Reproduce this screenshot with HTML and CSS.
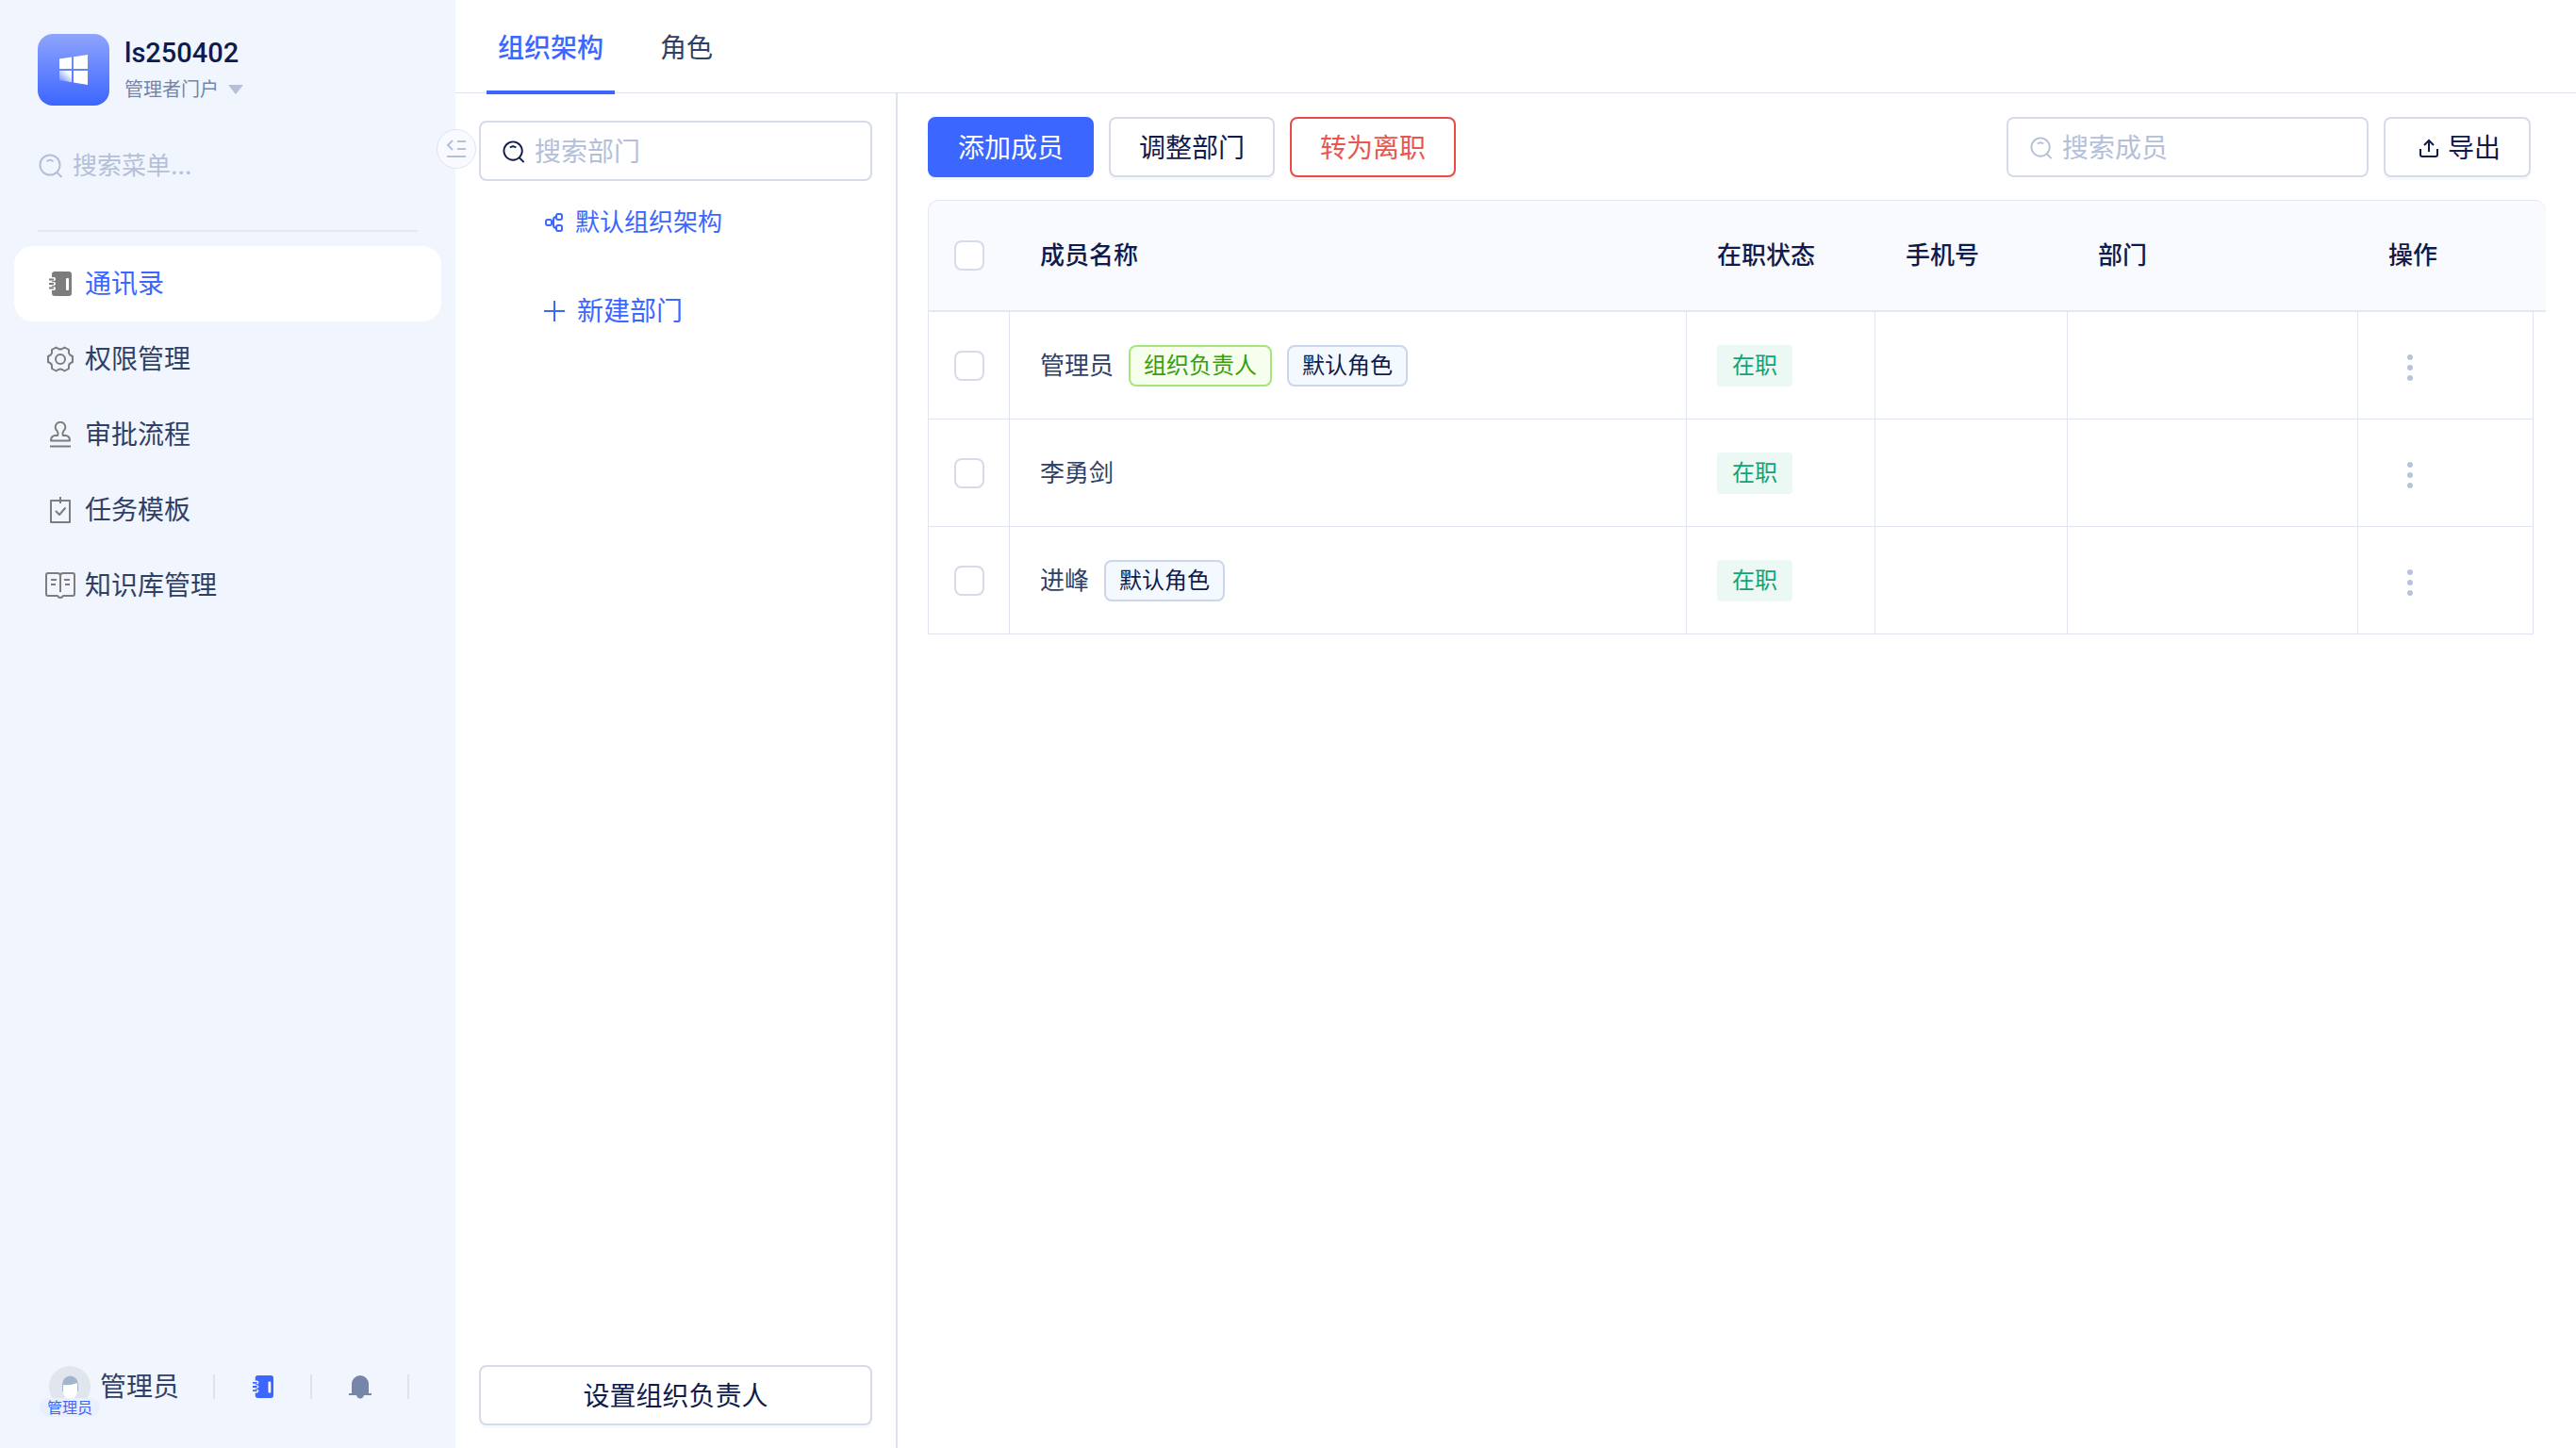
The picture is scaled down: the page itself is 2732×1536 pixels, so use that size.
FILE: index.html
```html
<!DOCTYPE html>
<html lang="zh-CN">
<head>
  <meta charset="UTF-8">
  <meta name="viewport" content="width=device-width, initial-scale=1">
  <title>通讯录</title>
  <link rel="stylesheet" href="styles.css">
</head>
<body>
  <svg width="0" height="0" class="sprite" aria-hidden="true">
    <symbol id="icon-search" viewBox="0 0 26 26">
      <circle cx="12" cy="12" r="10.5" fill="none" stroke="currentColor" stroke-width="2"/>
      <path d="M8.5 8.2Q12 5.4 15.500 8.200M19 19.500L24.500 25" fill="none" stroke="currentColor" stroke-width="2"/>
    </symbol>
    <symbol id="icon-contacts" viewBox="0 0 24 26">
      <path fill="currentColor" d="M6 0h15a3 3 0 0 1 3 3v20a3 3 0 0 1-3 3H6a3 3 0 0 1-3-3v-3h2a2 2 0 0 0 0-4H3v-1h2a2 2 0 0 0 0-4H3v-1h2a2 2 0 0 0 0-4H3V3a3 3 0 0 1 3-3z"/>
      <path d="M0 8.500h5M0 13h5M0 17.500h5" stroke="currentColor" stroke-width="2"/>
      <rect x="18" y="7" width="3" height="13" rx="1" fill="#fff"/>
    </symbol>
  </svg>

  <div class="app">
    <aside class="sidebar">
      <div class="brand">
        <div class="logo">
          <svg width="32" height="32" viewBox="0 0 32 32">
            <defs>
              <linearGradient id="pane" x1="1" y1="0" x2="0" y2="1">
                <stop offset="0.2" stop-color="#fff"/>
                <stop offset="1" stop-color="#fff" stop-opacity="0.1"/>
              </linearGradient>
            </defs>
            <path fill="#fff" d="M1 4.500L14 2.500V15H1zM16 2.200L31 0V15H16zM16 17H31V32L16 29.500z"/>
            <path fill="url(#pane)" d="M1 17H14V29.200L1 27z"/>
          </svg>
        </div>
        <div>
          <div class="brand-name">ls250402</div>
          <button class="portal" type="button">管理者门户 <span class="caret"></span></button>
        </div>
      </div>
      <label class="menu-search">
        <svg width="26" height="26"><use href="#icon-search"/></svg>
        <input type="text" placeholder="搜索菜单..." aria-label="搜索菜单">
      </label>

      <nav class="menu">
        <a href="#" class="menu-item active">
          <svg width="24" height="26"><use href="#icon-contacts"/></svg>
          <span>通讯录</span>
        </a>
        <a href="#" class="menu-item">
          <svg width="28" height="28" viewBox="0 0 28 28"><path d="M9.500 1.500L12 3Q14 4 16 3L18.500 1.500L23 4V7Q23 9 25 10L27 11V17L25 18Q23 19 23 21V24L18.500 26.500L16 25Q14 24 12 25L9.500 26.500L5 24V21Q5 19 3 18L1 17V11L3 10Q5 9 5 7V4Z"/><circle cx="14" cy="14" r="5"/></svg>
          <span>权限管理</span>
        </a>
        <a href="#" class="menu-item">
          <svg width="24" height="28" viewBox="0 0 24 28"><path d="M9 15C10 13 9.500 11.500 8.500 10A5.300 5.300 0 1 1 15.500 10C14.500 11.500 14 13 15 15H18Q22 15.500 22 20.500H2Q2 15.500 6 15ZM1 26.500H23"/></svg>
          <span>审批流程</span>
        </a>
        <a href="#" class="menu-item">
          <svg width="24" height="28" viewBox="0 0 24 28"><path d="M2 4H22V27H2ZM12 0V7M7 15L11 19L17.500 11.500"/></svg>
          <span>任务模板</span>
        </a>
        <a href="#" class="menu-item">
          <svg width="32" height="28" viewBox="0 0 32 28"><path d="M16 4Q16 1 13 1H3Q1 1 1 3V23Q1 25 3 25H13Q14 27 16 27Q18 27 19 25H29Q31 25 31 23V3Q31 1 29 1H19Q16 1 16 4V21M6 8H12M6 13H11M20 8H26M21 13H26"/></svg>
          <span>知识库管理</span>
        </a>
      </nav>

      <div class="user-bar">
        <a href="#" class="user">
          <span class="avatar">
            <svg width="44" height="44" viewBox="0 0 44 44">
              <circle cx="22" cy="22" r="22" fill="#e1e5ee"/>
              <path d="M14 20a8 9 0 0 1 17 0v7H14z" fill="#a3b4cb"/>
              <path d="M15 20Q22 21 30 18V27Q29 31 27 34H18Q15 31 15 27Z" fill="#fff"/>
            </svg>
            <span class="avatar-tag">管理员</span>
          </span>
          <span>管理员</span>
        </a>
        <button class="bar-btn primary" type="button" aria-label="通讯录"><svg width="22" height="24"><use href="#icon-contacts"/></svg></button>
        <button class="bar-btn" type="button" aria-label="通知"><svg width="24" height="26" viewBox="0 0 24 26"><path fill="currentColor" d="M3 20V10a9 9 0 0 1 18 0V20H24V22H16Q15 25.500 12 25.500Q9 25.500 8 22H0V20Z"/></svg></button>
      </div>

      <button class="collapse" type="button" aria-label="收起菜单">
        <svg width="22" height="20" viewBox="0 0 22 20"><path d="M7 1L2 6L7 11M12 2H21M12 10H21M1 18H21"/></svg>
      </button>
    </aside>

    <div class="content">
      <nav class="tabs">
        <a href="#" class="tab active">组织架构</a>
        <a href="#" class="tab">角色</a>
      </nav>

      <div class="panels">
        <section class="dept">
          <label class="field">
            <svg width="24" height="24"><use href="#icon-search"/></svg>
            <input type="text" placeholder="搜索部门" aria-label="搜索部门">
          </label>
          <a href="#" class="dept-root">
            <svg width="20" height="20" viewBox="0 0 20 20"><rect x="1" y="7" width="6" height="6" rx="2"/><rect x="12" y="1" width="6" height="6" rx="2"/><rect x="12" y="13" width="6" height="6" rx="2"/><path d="M12 4Q9 4 9 7V13Q9 16 12 16M7 10H9"/></svg>
            <span>默认组织架构</span>
          </a>
          <button class="dept-add" type="button">
            <svg width="24" height="24" viewBox="0 0 24 24"><path d="M12 1V23M1 12H23"/></svg>
            <span>新建部门</span>
          </button>
          <button class="btn dept-owner" type="button">设置组织负责人</button>
        </section>

        <main class="members">
          <div class="toolbar">
            <button class="btn btn-primary" type="button">添加成员</button>
            <button class="btn" type="button">调整部门</button>
            <button class="btn btn-danger" type="button">转为离职</button>
            <label class="field member-search">
              <svg width="24" height="24"><use href="#icon-search"/></svg>
              <input type="text" placeholder="搜索成员" aria-label="搜索成员">
            </label>
            <button class="btn btn-export" type="button">
              <svg width="20" height="20" viewBox="0 0 20 20"><path d="M1 11V17Q1 19 3 19H17Q19 19 19 17V11M10 14V2M5 7L10 2L15 7"/></svg>
              <span>导出</span>
            </button>
          </div>

          <table>
            <colgroup>
              <col class="col-check">
              <col>
              <col class="col-status">
              <col class="col-phone">
              <col class="col-dept">
              <col class="col-action">
              <col class="col-gutter">
            </colgroup>
            <thead>
              <tr>
                <th class="check"><input type="checkbox" aria-label="全选"></th>
                <th>成员名称</th>
                <th>在职状态</th>
                <th>手机号</th>
                <th>部门</th>
                <th>操作</th>
                <th></th>
              </tr>
            </thead>
            <tbody>
              <tr>
                <td class="check"><input type="checkbox" aria-label="选择管理员"></td>
                <td><div class="member">管理员 <span class="tag tag-owner">组织负责人</span> <span class="tag">默认角色</span></div></td>
                <td><span class="status">在职</span></td>
                <td></td>
                <td></td>
                <td><button class="more" type="button" aria-label="更多"><i></i><i></i><i></i></button></td>
              </tr>
              <tr>
                <td class="check"><input type="checkbox" aria-label="选择李勇剑"></td>
                <td><div class="member">李勇剑</div></td>
                <td><span class="status">在职</span></td>
                <td></td>
                <td></td>
                <td><button class="more" type="button" aria-label="更多"><i></i><i></i><i></i></button></td>
              </tr>
              <tr>
                <td class="check"><input type="checkbox" aria-label="选择进峰"></td>
                <td><div class="member">进峰 <span class="tag">默认角色</span></div></td>
                <td><span class="status">在职</span></td>
                <td></td>
                <td></td>
                <td><button class="more" type="button" aria-label="更多"><i></i><i></i><i></i></button></td>
              </tr>
            </tbody>
          </table>
        </main>
      </div>
    </div>
  </div>
</body>
</html>
```
FILE: styles.css
```css
* {
  box-sizing: border-box;
}

body {
  margin: 0;
  font-family: Inter, "Noto Sans CJK SC", sans-serif;
  font-size: 28px;
  line-height: 40px;
  color: #303f66;
  background: #fff;
}

a {
  color: inherit;
  text-decoration: none;
}

button, input {
  font: inherit;
  color: inherit;
  margin: 0;
}

button {
  padding: 0;
  border: none;
  background: none;
  cursor: pointer;
}

svg {
  display: block;
  flex: none;
}

.sprite {
  position: absolute;
}

.app {
  display: flex;
  min-height: 100vh;
}

/* 左侧菜单 */
.sidebar {
  position: relative;
  flex: none;
  display: flex;
  flex-direction: column;
  width: 483px;
  padding-top: 36px;
  background: #f0f5fe;
}

.brand {
  display: flex;
  gap: 16px;
  height: 76px;
  padding: 0 40px;
}

.logo {
  display: flex;
  align-items: center;
  justify-content: center;
  width: 76px;
  height: 76px;
  border-radius: 16px;
  background: linear-gradient(#8fa4fd, #3b66ff);
}

.brand-name {
  font-family: Roboto, "Noto Sans CJK SC", sans-serif;
  font-size: 29px;
  font-weight: 500;
  color: #0f1b4c;
}

.portal {
  display: flex;
  align-items: center;
  gap: 10px;
  font-size: 20px;
  line-height: 38px;
  color: #7485a6;
}

.caret {
  border: 8px solid transparent;
  border-top: 10px solid #b4c0d6;
  border-bottom: none;
}

.menu-search {
  display: flex;
  align-items: center;
  gap: 10px;
  height: 134px;
  margin: 0 40px;
  padding: 0 0 4px 1px;
  border-bottom: 2px solid #e4e8f1;
  font-size: 26px;
  color: #b4c0d6;
}

.menu-search input,
.field input {
  flex: 1;
  min-width: 0;
  padding: 0;
  border: none;
  outline: none;
  background: none;
}

::placeholder {
  color: #b4c0d8;
  opacity: 1;
}

.menu {
  margin-top: 15px;
  padding: 0 15px;
}

.menu-item {
  display: flex;
  align-items: center;
  gap: 9px;
  height: 80px;
  padding-left: 32px;
}

.menu-item svg {
  width: 34px;
  fill: none;
  stroke: #7d7d7d;
  stroke-width: 2;
  stroke-linejoin: round;
}

.menu-item.active {
  border-radius: 20px;
  background: #fff;
  color: #3b66ff;
}

.menu-item.active svg {
  color: #7d7d7d;
  stroke: none;
}

.user-bar {
  display: flex;
  align-items: center;
  margin-top: auto;
  padding: 0 49px 52px 42px;
}

.user {
  flex: 1;
  display: flex;
  align-items: center;
  border-right: 2px solid #dde2ed;
  height: 26px;
}

.avatar {
  position: relative;
  width: 64px;
  padding-left: 10px;
}

.avatar-tag {
  position: absolute;
  left: 0;
  bottom: -10px;
  width: 64px;
  border-radius: 10px;
  background: #eaeffe;
  font-size: 16px;
  line-height: 20px;
  text-align: center;
  color: #3b66ff;
}

.bar-btn {
  display: flex;
  align-items: center;
  justify-content: center;
  width: 103px;
  height: 26px;
  border-right: 2px solid #dde2ed;
  color: #7686a8;
}

.bar-btn.primary {
  color: #3b66ff;
}

.collapse {
  position: absolute;
  top: 137px;
  right: -22px;
  display: flex;
  align-items: center;
  justify-content: center;
  width: 42px;
  height: 42px;
  border: 1px solid #dfe4f0;
  border-radius: 50%;
  background: #f8faff;
}

.collapse svg {
  fill: none;
  stroke: #b4c0d6;
  stroke-width: 2;
}

/* 右侧内容 */
.content {
  flex: 1;
  min-width: 0;
  display: flex;
  flex-direction: column;
}

.tabs {
  display: flex;
  gap: 36px;
  height: 99px;
  padding: 0 33px;
  border-bottom: 1px solid #dde2ec;
}

.tab {
  height: 100px;
  padding: 31px 12px 0;
}

.tab.active {
  border-bottom: 4px solid #3b66ff;
  font-weight: 500;
  color: #3b66ff;
}

.panels {
  flex: 1;
  display: flex;
}

.dept {
  flex: none;
  display: flex;
  flex-direction: column;
  width: 469px;
  padding: 29px 25px 24px;
  border-right: 2px solid #dde2ec;
}

.field {
  display: flex;
  align-items: center;
  gap: 10px;
  height: 64px;
  padding: 2px 23px 0;
  border: 2px solid #d5dbe8;
  border-radius: 8px;
  color: #0f1b4c;
}

.dept-root,
.dept-add {
  display: flex;
  align-items: center;
  padding-left: 68px;
  color: #3b66ff;
}

.dept-root {
  gap: 12px;
  margin-top: 24px;
  font-size: 26px;
}

.dept-root svg,
.dept-add svg,
.btn-export svg {
  fill: none;
  stroke: currentColor;
  stroke-width: 2;
}

.dept-root svg {
  margin-left: 2px;
}

.dept-add {
  gap: 12px;
  margin-top: 54px;
}

.dept-owner {
  margin-top: auto;
}

.btn {
  display: flex;
  align-items: center;
  justify-content: center;
  height: 64px;
  padding: 2px 30px 0;
  border: 2px solid #d5dbe8;
  border-radius: 8px;
  background: #fff;
  color: #0f1b4c;
  box-shadow: 0 3px 0 #f7f8fd;
}

.btn-primary {
  border-color: #3b66ff;
  background: #3b66ff;
  color: #fff;
}

.btn-danger {
  border-color: #e84a4a;
  color: #ea5550;
  box-shadow: 0 3px 0 #fdf3f3;
}

.btn-export {
  gap: 10px;
  padding-left: 36px;
}

.members {
  flex: 1;
  min-width: 0;
  padding: 25px 32px;
}

.toolbar {
  display: flex;
  gap: 16px;
  padding-right: 16px;
}

.member-search {
  width: 384px;
  margin-left: auto;
  color: #b4c0d6;
}

table {
  width: 100%;
  margin-top: 24px;
  table-layout: fixed;
  border-collapse: separate;
  border-spacing: 0;
  font-size: 26px;
}

.col-check {
  width: 87px;
}

.col-status {
  width: 200px;
}

.col-phone {
  width: 204px;
}

.col-dept {
  width: 308px;
}

.col-action {
  width: 186px;
}

.col-gutter {
  width: 13px;
}

th, td {
  padding: 0 0 0 32px;
  text-align: left;
}

th {
  height: 119px;
  background: #f8fafe;
  border-top: 1px solid #e4e8f2;
  border-bottom: 2px solid #e4e8f2;
  font-weight: 500;
  color: #0f1b4c;
}

th:first-child {
  border-left: 1px solid #e4e8f2;
  border-top-left-radius: 12px;
}

th:last-child {
  padding: 0;
  border-top-right-radius: 12px;
}

td {
  height: 114px;
  border-right: 1px solid #dfe4ef;
  border-bottom: 1px solid #dfe4ef;
}

td:first-child {
  border-left: 1px solid #dfe4ef;
}

.check {
  padding: 0 0 0 27px;
}

.check input {
  display: block;
  appearance: none;
  width: 32px;
  height: 32px;
  border: 2px solid #d5dbe8;
  border-radius: 8px;
  background: #fff;
}

.check input:checked {
  border-color: #3b66ff;
  background: #3b66ff;
}

.member {
  display: flex;
  align-items: center;
  gap: 16px;
}

.tag {
  padding: 0 14px;
  border: 2px solid #ccd5ea;
  border-radius: 8px;
  background: #f4f8ff;
  font-size: 24px;
  color: #0f1b4c;
}

.tag-owner {
  border-color: #a6e47c;
  background: #f6ffed;
  color: #389e0d;
}

.status {
  display: inline-block;
  padding: 2px 16px;
  border-radius: 4px;
  background: #ebf8f3;
  font-size: 24px;
  color: #12a375;
}

.more {
  display: flex;
  flex-direction: column;
  gap: 5px;
  padding: 4px 20px 0;
}

.more i {
  width: 6px;
  height: 6px;
  border-radius: 50%;
  background: #b9c3dc;
}
```
